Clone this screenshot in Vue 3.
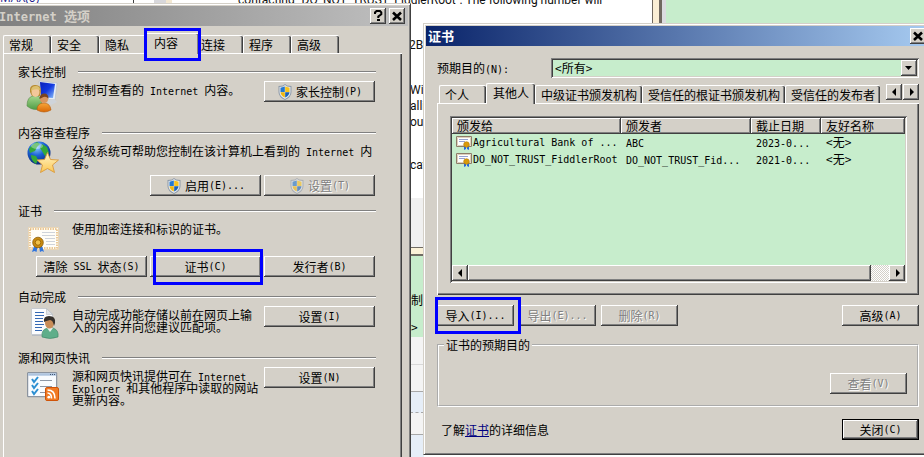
<script setup>
import { ref, h } from 'vue'

// Chinese text is 12px wide per character, latin runs are half of that
const Mixed = (props) =>
  props.text
    .split(/([\x20-\x7e]+)/)
    .filter(Boolean)
    .map((part) => (/^[\x20-\x7e]/.test(part) ? h('span', { class: 'latin' }, part) : part))
Mixed.props = ['text']

const optionTabs = ['常规', '安全', '隐私', '内容', '连接', '程序', '高级']
const activeOption = ref('内容')

const storeTabs = ['个人', '其他人', '中级证书颁发机构', '受信任的根证书颁发机构', '受信任的发布者']
const activeStore = ref('其他人')

const purpose = ref('all')

const certificates = [
  { to: 'Agricultural Bank of ...', by: 'ABC', expires: '2023-0...', name: '<无>' },
  { to: 'DO_NOT_TRUST_FiddlerRoot', by: 'DO_NOT_TRUST_Fid...', expires: '2021-0...', name: '<无>' }
]
</script>

<template>
  <div class="desktop">
    <svg class="symbols">
      <symbol id="shield" viewBox="0 0 16 16">
        <path d="M8 0l2 1.500L14.500 2v6q0 5-6.500 8-6.500-3-6.500-8V2L6 1.500z" fill="#8d99a8" />
        <path d="M8 1l2 1.500 3.500.5v5q0 4.300-5.500 7-5.500-2.700-5.500-7V3L6 2.500z" fill="#e6ebf0" />
        <path d="M7.800 2.500V8H3.500V3.800z" fill="#2478cf" />
        <path d="M8.200 2.500V8h4.300V3.800z" fill="#f9c41c" />
        <path d="M7.800 8.200v5.400Q3.800 11.500 3.500 8.200z" fill="#f2b80e" />
        <path d="M8.200 8.200v5.400q4-2.100 4.300-5.400z" fill="#1c62b5" />
      </symbol>
      <symbol id="cross" viewBox="0 0 12 12">
        <path d="M2 2.500l8 7.500M10 2.500L2 10" stroke="#000" stroke-width="2.600" />
      </symbol>
    </svg>

    <!-- editor and message windows behind the dialogs -->
    <div class="backdrop">
      <span class="code">MAX(0)</span>
      <div class="splitter"></div>
      <div class="gutter"></div>
      <p class="message first">contacting "DO_NOT_TRUST_FiddlerRoot". The following number will</p>
      <p class="message hex">2B2</p>
      <p class="message para">Wi<br>alli<br>ou</p>
      <p class="message cat">cat</p>
      <div class="edge"></div>
      <div class="green"></div>
      <div class="side">
        <div class="side-grey"></div>
        <div class="side-line"></div>
        <div class="side-green"><span>制</span><span>&gt;</span></div>
        <div class="side-cell"></div>
        <div class="side-cell dark"></div>
        <div class="side-cell blue"></div>
        <div class="side-cell dark"></div>
        <div class="side-rest"></div>
      </div>
    </div>

    <section class="window options">
      <header class="titlebar inactive">
        <h1><Mixed text="Internet 选项" /></h1>
        <button class="caption" aria-label="帮助">
          <svg width="12" height="12" viewBox="0 0 12 12"><path d="M3 4V2.500L4.500 1H8L9.300 2.300V4.300L6.300 6.500V8" fill="none" stroke="#000" stroke-width="2" /><path d="M5 9h3v2H5z" /></svg>
        </button>
        <button class="caption" aria-label="关闭"><svg width="12" height="12"><use href="#cross" /></svg></button>
      </header>

      <nav class="tabs option-tabs">
        <button
          v-for="tab in optionTabs"
          :key="tab"
          class="tab"
          :class="{ active: tab === activeOption, marked: tab === '内容' }"
          @click="activeOption = tab"
        >{{ tab }}</button>
      </nav>

      <div class="page">
        <section class="group">
          <h2>家长控制</h2>
          <div class="row">
            <svg class="icon" viewBox="0 0 32 32">
              <defs>
                <linearGradient id="screen" x1="0" y1="0" x2="1" y2="1"><stop offset="0" stop-color="#0a1fb8" /><stop offset=".5" stop-color="#1238e0" /><stop offset="1" stop-color="#8fc4f8" /></linearGradient>
                <linearGradient id="shirt" x1="0" y1="0" x2="0" y2="1"><stop offset="0" stop-color="#a5d68c" /><stop offset="1" stop-color="#4f9d45" /></linearGradient>
                <linearGradient id="kid" x1="0" y1="0" x2="0" y2="1"><stop offset="0" stop-color="#f7a63a" /><stop offset="1" stop-color="#d96806" /></linearGradient>
              </defs>
              <path d="M12 1l18 2-2 17-14-1z" fill="#e8eef5" stroke="#b3bac4" stroke-width=".6" />
              <path d="M13 2l15 2-2 14-12-1z" fill="url(#screen)" />
              <path d="M20 21l7-2 3 3-6 3z" fill="#cfd4da" />
              <path d="M0 26q0-9 6-10h5q4 2 4 12-8 4-15-2z" fill="url(#shirt)" stroke="#568b48" stroke-width=".6" />
              <path d="M3 12q-1-6 4-7 7-1 7 6l-1 5H5z" fill="#b98d35" />
              <ellipse cx="8.500" cy="12" rx="4" ry="5" fill="#f3c79a" />
              <path d="M4 11q0-5 5-5 4 0 4 4-5-2-9 1z" fill="#dcc070" />
              <path d="M10 30q0-7 7-7 6 0 7 7-7 4-14 0z" fill="url(#kid)" stroke="#b65a0a" stroke-width=".6" />
              <circle cx="17" cy="19" r="4" fill="#d89660" />
              <path d="M12.500 19q0-5.500 5-5.500 4 0 4 5.500-2-3-5-2z" fill="#7a4420" />
            </svg>
            <p><Mixed text="控制可查看的 Internet 内容。" /></p>
            <button class="btn">
              <svg class="shield"><use href="#shield" /></svg>
              <Mixed text="家长控制(P)" />
            </button>
          </div>
        </section>

        <section class="group">
          <h2>内容审查程序</h2>
          <div class="row">
            <svg class="icon" viewBox="0 0 32 32">
              <defs>
                <radialGradient id="globe" cx=".4" cy=".25" r=".8"><stop offset="0" stop-color="#8fd0ff" /><stop offset=".45" stop-color="#1b62d6" /><stop offset="1" stop-color="#06206e" /></radialGradient>
                <linearGradient id="star" x1="0" y1="0" x2="0" y2="1"><stop offset="0" stop-color="#fff6cd" /><stop offset="1" stop-color="#fcc751" /></linearGradient>
              </defs>
              <circle cx="12" cy="12" r="11.500" fill="url(#globe)" />
              <path d="M2 8q3-5 8-7l3 2-3 3-2 4-5 2zM15 3l5 3 2 6-4 3-3-5-2-3zM4 14l5 1 2 4-2 4q-5-3-5-9z" fill="#35a83a" />
              <ellipse cx="10" cy="5" rx="6" ry="3" fill="#fff" opacity=".35" />
              <path d="M20.500 11.500l3 7 8 .5-6 5 2 7.500-7-4-7 4 2-7.500-5.500-5 7.500-.5z" fill="url(#star)" stroke="#d9983a" stroke-width=".9" />
            </svg>
            <p><Mixed text="分级系统可帮助您控制在该计算机上看到的 Internet 内容。" /></p>
          </div>
          <div class="actions">
            <button class="btn">
              <svg class="shield"><use href="#shield" /></svg>
              <Mixed text="启用(E)..." />
            </button>
            <button class="btn" disabled>
              <svg class="shield"><use href="#shield" /></svg>
              <Mixed text="设置(T)" />
            </button>
          </div>
        </section>

        <section class="group certs">
          <h2>证书</h2>
          <div class="row">
            <svg class="icon" viewBox="0 0 32 32">
              <path d="M1.500 8.500h30v22h-30z" fill="#fffdf8" stroke="#e9d5b5" />
              <path d="M3 10h27v19H3z" fill="none" stroke="#e3b877" stroke-width="1.500" stroke-dasharray="1.500 1" />
              <path d="M15 13.500h13M15 16.500h13M18 19.500h10M19 22.500h9M19 25.500h9" stroke="#cfd3da" />
              <path d="M7 27l-2 6 2.500-1 2 1 1-5zM12 27l1 6 2-1 2 1-2-6z" fill="#2f74dd" />
              <circle cx="11" cy="23.500" r="5.300" fill="#c98a10" stroke="#8c5c05" stroke-width=".8" />
              <circle cx="11" cy="23.500" r="2.800" fill="#f0c04a" stroke="#a06c08" />
            </svg>
            <p>使用加密连接和标识的证书。</p>
          </div>
          <div class="actions">
            <button class="btn"><Mixed text="清除 SSL 状态(S)" /></button>
            <button class="btn marked"><Mixed text="证书(C)" /></button>
            <button class="btn"><Mixed text="发行者(B)" /></button>
          </div>
        </section>

        <section class="group">
          <h2>自动完成</h2>
          <div class="row">
            <svg class="icon" viewBox="0 0 32 32">
              <path d="M5 4h15l6 5v22H5z" fill="#b8bcc2" />
              <path d="M4.500 3.500h15l6 5.500v20.500h-21z" fill="#fbfcfe" stroke="#c6cad0" />
              <path d="M19.500 3.500v6h6z" fill="#dfe3e8" stroke="#b4b8be" stroke-width=".6" />
              <path d="M8 7.500h9M8 10.500h9M8 13.500h8M8 16.500h8M8 19.500h9M8 22.500h7M8 25.500h7" stroke="#3468b4" />
              <path d="M15 32q-1-8 6-9h5q6 2 5 9-8 3-16 0z" fill="#5fae8a" stroke="#3c8464" stroke-width=".6" />
              <path d="M20 23l3 4 3-4z" fill="#e8f2ec" />
              <ellipse cx="22.500" cy="18" rx="4.500" ry="5.500" fill="#c98d58" />
              <path d="M17 17q-1-6 5-6 7 0 6 7l-1 3q-1-6-4-6-4 1-6 2z" fill="#35302c" />
            </svg>
            <p>自动完成功能存储以前在网页上输入的内容并向您建议匹配项。</p>
            <button class="btn"><Mixed text="设置(I)" /></button>
          </div>
        </section>

        <section class="group">
          <h2>源和网页快讯</h2>
          <div class="row">
            <svg class="icon" viewBox="0 0 32 32">
              <path d="M.7 6.700h29v24h-29z" fill="#f8fbfe" stroke="#788290" />
              <path d="M1.200 7.200h28v2.500h-28z" fill="#adc3de" />
              <path d="M23 8.500h1M25 8.500h1M27 8.500h1" stroke="#3f5572" />
              <path d="M13 14.500h12M13 20.500h12M13 26.500h5" stroke="#8d97a5" />
              <path d="M5 13l2 3 4-5M5 19l2 3 4-5M5 25l2 3 4-5" fill="none" stroke="#2c8fd2" stroke-width="2" />
              <rect x="18.500" y="21.500" width="13" height="13" rx="1.500" fill="#f17a24" stroke="#cf5409" />
              <circle cx="21.800" cy="31.200" r="1.400" fill="#fff" />
              <path d="M20.500 27q4 0 4 5.500M20.500 24q7.500 0 7.500 8.500" fill="none" stroke="#fff" stroke-width="1.600" />
            </svg>
            <p><Mixed text="源和网页快讯提供可在 Internet Explorer 和其他程序中读取的网站更新内容。" /></p>
            <button class="btn"><Mixed text="设置(N)" /></button>
          </div>
        </section>
      </div>
    </section>

    <section class="window certificates">
      <header class="titlebar">
        <h1>证书</h1>
        <button class="caption" aria-label="关闭"><svg width="12" height="12"><use href="#cross" /></svg></button>
      </header>

      <div class="body">
        <div class="purpose">
          <label for="purpose"><Mixed text="预期目的(N):" /></label>
          <div class="combo">
            <select id="purpose" v-model="purpose">
              <option value="all">&lt;所有&gt;</option>
            </select>
            <span class="drop"><svg width="8" height="4" viewBox="0 0 8 4"><path d="M0 0h7L3.500 4z" /></svg></span>
          </div>
        </div>

        <div class="tab-strip">
          <nav class="tabs">
            <button
              v-for="tab in storeTabs"
              :key="tab"
              class="tab"
              :class="{ active: tab === activeStore }"
              @click="activeStore = tab"
            >{{ tab }}</button>
          </nav>
          <div class="spin">
            <button class="arrow" aria-label="向左"><svg width="5" height="8" viewBox="0 0 5 8"><path d="M4 0v8L0 4z" /></svg></button>
            <button class="arrow" aria-label="向右"><svg width="5" height="8" viewBox="0 0 5 8"><path d="M1 0v8l4-4z" /></svg></button>
          </div>
        </div>

        <div class="panel">
          <div class="list">
            <table>
              <colgroup>
                <col class="col-to">
                <col class="col-by">
                <col class="col-date">
                <col>
              </colgroup>
              <thead>
                <tr><th>颁发给</th><th>颁发者</th><th>截止日期</th><th>友好名称</th></tr>
              </thead>
              <tbody>
                <tr v-for="cert in certificates" :key="cert.to">
                  <td class="subject">
                    <svg width="16" height="15" viewBox="0 0 16 15"><path d="M.5 1.500h15v10H.5z" fill="#fff" stroke="#8d7c68" /><path d="M1.500 2.500h13v8h-13z" fill="none" stroke="#ddd0bd" /><path d="M3 4.500h9M3 6.500h6" stroke="#97a3d0" /><path d="M8 10v5l2-1V10zM11 10v4l2 1v-5z" fill="#2467e0" /><circle cx="10.500" cy="9.500" r="2.800" fill="#d99a0b" stroke="#b67a05" stroke-width=".6" /></svg>
                    <Mixed :text="cert.to" />
                  </td>
                  <td><Mixed :text="cert.by" /></td>
                  <td><Mixed :text="cert.expires" /></td>
                  <td>{{ cert.name }}</td>
                </tr>
              </tbody>
            </table>
            <div class="scrollbar">
              <button class="arrow" aria-label="向左滚动"><svg width="5" height="8" viewBox="0 0 5 8"><path d="M4 0v8L0 4z" /></svg></button>
              <div class="thumb"></div>
              <div class="track"></div>
              <button class="arrow" aria-label="向右滚动"><svg width="5" height="8" viewBox="0 0 5 8"><path d="M1 0v8l4-4z" /></svg></button>
            </div>
          </div>
        </div>

        <div class="toolbar">
          <button class="btn small marked"><Mixed text="导入(I)..." /></button>
          <button class="btn small" disabled><Mixed text="导出(E)..." /></button>
          <button class="btn small" disabled><Mixed text="删除(R)" /></button>
          <button class="btn small last"><Mixed text="高级(A)" /></button>
        </div>

        <fieldset>
          <legend>证书的预期目的</legend>
          <button class="btn small" disabled><Mixed text="查看(V)" /></button>
        </fieldset>

        <footer>
          <p>了解<a href="#">证书</a>的详细信息</p>
          <button class="btn small default"><Mixed text="关闭(C)" /></button>
        </footer>
      </div>
    </section>
  </div>
</template>

<style>
body {
  margin: 0;
  overflow: hidden;
}

.latin {
  font-family: "DejaVu Sans Mono", monospace;
  font-size: 10px;
  line-height: 0;
  white-space: pre-wrap;
}

h1 .latin {
  font-size: 12px;
}
</style>

<style scoped>
.desktop {
  position: relative;
  min-height: 100vh;
  overflow: hidden;
  background: #fff;
  color: #000;
  font: 12px/12px "Noto Sans CJK SC", sans-serif;
}

.symbols {
  position: absolute;
  width: 0;
  height: 0;
}

h1, h2, p {
  margin: 0;
  font-size: 12px;
  font-weight: normal;
}

button, select {
  margin: 0;
  padding: 0;
  border: 0;
  border-radius: 0;
  color: inherit;
  font: inherit;
}

/* backdrop */
.backdrop > * {
  position: absolute;
}

.code {
  left: 0;
  top: -8px;
  color: #1a1a8c;
  font-family: "Open Sans", sans-serif;
}

.splitter {
  left: 133px;
  top: 0;
  width: 1px;
  height: 4px;
  background: #404040;
}

.gutter {
  left: 154px;
  top: 0;
  width: 12px;
  height: 4px;
  background: #d8d8dc;
  border-right: 6px solid #f3e8d2;
}

.message {
  color: #111;
  font-family: Roboto, sans-serif;
  line-height: 16px;
  white-space: nowrap;
}

.first {
  left: 238px;
  top: -8px;
}

.hex {
  left: 409px;
  top: 37px;
}

.para {
  left: 410px;
  top: 82px;
}

.cat {
  left: 410px;
  top: 157px;
}

.edge {
  left: 652px;
  top: 0;
  width: 6px;
  height: 24px;
  background: #fbeed5;
  border: solid #706860;
  border-width: 0 3px 0 1px;
}

.green {
  left: 662px;
  right: 0;
  top: 0;
  height: 24px;
  background: #c7edcc;
  border-left: 4px solid #dcdce0;
}

.side {
  left: 410px;
  top: 198px;
  bottom: 0;
  width: 14px;
  display: flex;
  flex-direction: column;
}

.side-grey {
  height: 49px;
  background: #f0f0f0;
}

.side-line {
  height: 6px;
  background: #fbf2d8;
  border: solid #706c64;
  border-width: 1px 0 2px;
}

.side-green {
  height: 81px;
  box-sizing: border-box;
  padding-top: 38px;
  display: flex;
  flex-direction: column;
  gap: 15px;
  background: #c7edcc;
}

.side-green span {
  padding-left: 1px;
}

.side-cell {
  height: 27px;
  background: #f4f4f4;
  border-bottom: 1px solid #d8d8d8;
}

.side-cell.dark {
  height: 26px;
  border-color: #a8a8a8;
}

.side-cell.blue {
  height: 20px;
  background: #e6eef8;
  border-bottom: 1px dashed #a8a8a8;
}

.side-cell.blue + .side-cell {
  height: 21px;
}

.side-rest {
  flex: 1;
  background: #e6eef8;
}

/* windows */
.window {
  position: absolute;
  box-sizing: border-box;
  background: #d4d0c8;
  border: 1px solid #d4d0c8;
  border-right-color: #404040;
  border-bottom-color: #404040;
  box-shadow: inset 1px 1px #fff, inset -1px -1px #808080;
}

.options {
  left: -4px;
  top: 3px;
  bottom: -8px;
  width: 415px;
  padding: 2px;
  display: flex;
  flex-direction: column;
}

.certificates {
  left: 423px;
  right: -7px;
  top: 23px;
  padding: 2px;
}

.titlebar {
  display: flex;
  align-items: center;
  gap: 3px;
  height: 20px;
  padding: 0 2px;
  background: linear-gradient(to right, #0a246a, #a6caf0);
  color: #fff;
}

.titlebar.inactive {
  padding: 0 3px 0 0;
  background: linear-gradient(to right, #808080, #c0c0c0);
  color: #d4d0c8;
}

.titlebar h1 {
  flex: 1;
  font-size: 13px;
  font-weight: bold;
}

.caption, .arrow, .drop {
  display: flex;
  align-items: center;
  justify-content: center;
  width: 16px;
  height: 16px;
  background: #d4d0c8;
  color: #000;
  box-shadow: inset -1px -1px #404040, inset 1px 1px #fff, inset -2px -2px #808080;
}

/* tabs */
.tabs {
  display: flex;
  align-items: flex-end;
}

.option-tabs {
  padding: 7px 4px 0;
}

.tab {
  flex: none;
  position: relative;
  height: 18px;
  min-width: 48px;
  padding: 0 5px;
  background: #d4d0c8;
  border: solid #fff;
  border-width: 1px 0 0 1px;
  border-radius: 2px 2px 0 0;
  box-shadow: inset -1px 0 #404040, inset -2px 0 #808080;
  text-align: left;
  white-space: nowrap;
}

.tab.active {
  z-index: 1;
  height: 21px;
  margin-bottom: -1px;
  padding-bottom: 3px;
}

.option-tabs .tab.active {
  padding-left: 8px;
  min-width: 54px;
  margin-left: -2px;
  margin-right: -4px;
}

.marked {
  position: relative;
}

.marked::after {
  content: "";
  position: absolute;
  border: 3px solid #00f;
}

.tab.marked::after {
  inset: -6px -2px -7px -2px;
}

.actions .marked::after {
  inset: -7px -2px -8px 3px;
}

.toolbar .marked::after {
  inset: -8px -7px -8px -2px;
}

/* internet options page */
.page {
  flex: 1;
  margin: 0 6px 0 4px;
  padding: 11px 26px 0 14px;
  border: solid #fff;
  border-width: 1px 0 0 1px;
  box-shadow: inset -1px 0 #404040, inset -2px 0 #808080;
}

.group {
  min-height: 61px;
}

.group h2 {
  display: flex;
  align-items: center;
  gap: 12px;
  height: 14px;
}

.group h2::after {
  content: "";
  flex: 1;
  height: 1px;
  background: #808080;
  border-bottom: 1px solid #fff;
}

.row {
  display: flex;
  align-items: flex-start;
  min-height: 35px;
  padding-left: 9px;
}

.icon {
  flex: none;
  width: 32px;
  height: 32px;
  margin-top: 1px;
  margin-right: 13px;
  overflow: visible;
}

.row p {
  flex: 1;
  padding-top: 5px;
}

.row .btn {
  margin: 2px 1px 0 4px;
}

.actions {
  display: flex;
  justify-content: flex-end;
  gap: 3px;
  padding: 0 1px 8px 0;
}

.certs .actions {
  padding: 3px 1px 13px 0;
}

.btn {
  flex: none;
  display: flex;
  align-items: center;
  justify-content: center;
  width: 111px;
  height: 21px;
  background: #d4d0c8;
  box-shadow: inset -1px -1px #404040, inset 1px 1px #fff, inset -2px -2px #808080;
  white-space: pre;
}

.btn:disabled {
  color: #808080;
  text-shadow: 1px 1px #fff;
}

.btn:disabled .shield {
  opacity: .6;
}

.small {
  width: 77px;
}

.default {
  border: 1px solid #000;
}

.shield {
  width: 16px;
  height: 16px;
  margin-right: 3px;
}

/* certificates */
.body {
  padding: 12px 9px 12px 11px;
}

.purpose {
  display: flex;
  align-items: center;
}

.purpose label {
  width: 114px;
}

.combo {
  position: relative;
  flex: 1;
}

.combo select {
  display: block;
  width: 100%;
  height: 20px;
  padding: 0 20px 0 4px;
  appearance: none;
  background: #c7edcc;
  box-shadow: inset 1px 1px #808080, inset -1px -1px #fff, inset 2px 2px #404040, inset -2px -2px #d4d0c8;
}

.drop {
  position: absolute;
  top: 2px;
  right: 2px;
  pointer-events: none;
}

.tab-strip {
  display: flex;
  align-items: flex-start;
  padding-top: 5px;
}

.tab-strip .tabs {
  flex: 1;
  min-width: 0;
  padding-left: 2px;
}

.tab-strip .tab {
  min-width: 47px;
}

.tab-strip .tab.active {
  padding-left: 6px;
  padding-right: 6px;
}

.spin {
  display: flex;
  gap: 1px;
  padding-top: 1px;
}

.panel {
  padding: 12px;
  border: solid #fff;
  border-width: 1px 0 0 1px;
  box-shadow: inset -1px -1px #404040, inset -2px -2px #808080;
}

.list {
  display: flex;
  flex-direction: column;
  height: 163px;
  padding: 2px;
  background: #c7edcc;
  box-shadow: inset 1px 1px #808080, inset -1px -1px #fff, inset 2px 2px #404040, inset -2px -2px #d4d0c8;
}

table {
  flex: none;
  width: 100%;
  border-collapse: separate;
  border-spacing: 0;
  table-layout: fixed;
}

.col-to {
  width: 169px;
}

.col-by {
  width: 130px;
}

.col-date {
  width: 70px;
}

th, td {
  box-sizing: border-box;
  height: 17px;
  padding: 0 0 2px 5px;
  text-align: left;
  font-weight: normal;
  white-space: nowrap;
}

th {
  height: 16px;
  padding-bottom: 0;
  background: #d4d0c8;
  box-shadow: inset -1px -1px #404040, inset 1px 1px #fff, inset -2px -2px #808080;
}

td.subject {
  display: flex;
  align-items: center;
  gap: 1px;
  padding: 0 0 0 4px;
}

.scrollbar {
  display: flex;
  height: 16px;
  margin-top: auto;
}

.thumb {
  flex: 1;
  background: #d4d0c8;
  box-shadow: inset -1px -1px #404040, inset 1px 1px #fff, inset -2px -2px #808080;
}

.track {
  width: 18px;
  background: repeating-conic-gradient(#fff 0 25%, #d4d0c8 0 50%) 0 0 / 2px 2px;
}

.toolbar {
  display: flex;
  gap: 5px;
  padding-top: 10px;
}

.toolbar .last {
  margin-left: auto;
}

fieldset {
  display: flex;
  justify-content: flex-end;
  margin: 13px 0 0;
  padding: 22px 10px 11px 5px;
  border: 2px groove #fff;
}

legend {
  padding: 0 2px;
}

footer {
  display: flex;
  align-items: center;
  justify-content: space-between;
  padding: 12px 0 0 4px;
}

footer a {
  color: #000080;
}
</style>
